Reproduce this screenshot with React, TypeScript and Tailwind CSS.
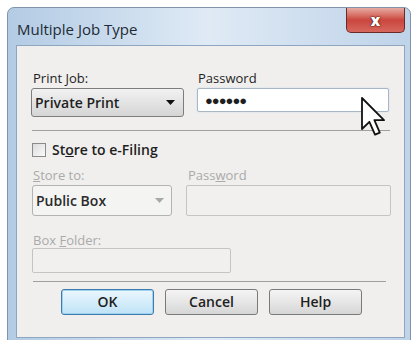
import React from "react";

const font = { fontFamily: '"Open Sans", "Noto Sans", sans-serif' };

function Arrow({ color = "#111" }: { color?: string }) {
  return (
    <svg width="9" height="6" viewBox="0 0 9 6">
      <polygon points="0,0 9,0 4.5,5" fill={color} />
    </svg>
  );
}

export default function App() {
  return (
    <div className="relative w-[412px] h-[340px] bg-white overflow-hidden" style={font}>
      <div className="ml-[7px] mt-[7px] w-[404px] h-[336px] rounded-t-[7px] border border-[#7f93aa] bg-gradient-to-r from-[#b3cbe4] via-[#dfeaf5] to-[#bfd3e9] flex flex-col">
        {/* title bar */}
        <div className="h-[37px] flex items-start justify-between">
          <div className="pl-[9px] pt-[12px] text-[15px] leading-[18px] text-[#1e2a35]">Multiple Job Type</div>
          <div className="mr-[5px] w-[59px] h-[25px] rounded-b-[5px] border border-[#6b2a27] border-t-0 bg-gradient-to-b from-[#e6aaa2] via-[#c9463e] to-[#d6675d] flex items-center justify-center">
            <span className="text-white font-extrabold text-[15px] leading-none" style={{ textShadow: "0 0 2px #3a0a0a, 0 0 1px #3a0a0a" }}>x</span>
          </div>
        </div>
        {/* client */}
        <div className="ml-[8px] mr-[5px] mb-[4px] flex-1 border border-[#8ea6c0] bg-[#f0efed] flex flex-col text-[13px] leading-[16px] text-[#1e1e1e]">
          {/* row 1 */}
          <div className="flex mt-[24px] ml-[14px]">
            <div className="flex flex-col w-[153px]">
              <span className="font-medium pl-[2px]">Print <u>J</u>ob:</span>
              <div className="mt-[2px] h-[29px] rounded-[3px] border border-[#7d7d7d] bg-gradient-to-b from-[#f2f2f2] to-[#d5d5d5] flex items-center justify-between pl-[3px] pr-[8px]">
                <span className="font-semibold text-[14px]">Private Print</span>
                <Arrow />
              </div>
            </div>
            <div className="flex flex-col ml-[13px] w-[192px]">
              <span className="font-medium pl-[1px]">Password</span>
              <div className="mt-[2px] h-[24px] rounded-[2px] border border-[#a9b6c4] bg-white flex items-center pl-[7px] shadow-[0_0_2px_#c9dcee]">
                <span className="text-[13px] tracking-[-1px] font-bold">●●●●●●</span>
              </div>
            </div>
          </div>
          <div className="mt-[13px] ml-[15px] w-[358px] h-[2px] border-t border-[#a0a0a0] border-b-white" />
          {/* checkbox */}
          <div className="flex items-center mt-[10px] ml-[15px] gap-[6px]">
            <div className="w-[14px] h-[14px] border border-[#8b8b8b] bg-gradient-to-br from-[#dcdcdc] to-[#fafafa]" />
            <span className="font-semibold text-[14px]">St<u>o</u>re to e-Filing</span>
          </div>
          {/* store row */}
          <div className="flex mt-[9px] ml-[15px]">
            <div className="flex flex-col w-[140px]">
              <span className="text-[#aaaaaa] pl-[1px]"><u>S</u>tore to:</span>
              <div className="mt-[2px] h-[31px] rounded-[3px] border border-[#b3b3b3] bg-[#f4f4f3] flex items-center justify-between pl-[3px] pr-[7px]">
                <span className="font-semibold text-[14px] text-[#2a2a2a]">Public Box</span>
                <Arrow color="#a8a8a8" />
              </div>
            </div>
            <div className="flex flex-col ml-[14px] w-[205px]">
              <span className="text-[#aaaaaa] pl-[2px]">Pass<u>w</u>ord</span>
              <div className="mt-[2px] h-[31px] rounded-[2px] border border-[#c4c4c4] bg-[#f1f0ee]" />
            </div>
          </div>
          {/* box folder */}
          <div className="flex flex-col mt-[16px] ml-[15px] w-[199px]">
            <span className="text-[#aaaaaa] pl-[1px]">Box <u>F</u>older:</span>
            <div className="mt-[0px] h-[25px] rounded-[2px] border border-[#c4c4c4] bg-[#f1f0ee]" />
          </div>
          <div className="mt-[8px] ml-[16px] w-[353px] h-[2px] border-t border-[#a0a0a0] border-b-white" />
          {/* buttons */}
          <div className="flex mt-[6px] ml-[44px] gap-[11px] text-[14px] font-semibold">
            <div className="w-[93px] h-[26px] rounded-[3px] border border-[#3d7bad] bg-gradient-to-b from-[#eaf6fd] via-[#d5edfa] to-[#bee3f6] flex items-center justify-center text-[#1e1e1e] shadow-[inset_0_0_0_1px_#9fd2ef]">OK</div>
            <div className="w-[93px] h-[26px] rounded-[3px] border border-[#7a7a7a] bg-gradient-to-b from-[#f4f4f4] via-[#e6e6e6] to-[#d6d6d6] flex items-center justify-center">Cancel</div>
            <div className="w-[93px] h-[26px] rounded-[3px] border border-[#7a7a7a] bg-gradient-to-b from-[#f4f4f4] via-[#e6e6e6] to-[#d6d6d6] flex items-center justify-center">Help</div>
          </div>
        </div>
      </div>
      {/* mouse cursor */}
      <svg className="absolute left-[361px] top-[97px]" width="26" height="40" viewBox="0 0 13 20">
        <polygon points="0.5,0.5 0.5,16 4.2,12.4 7,18.8 9.4,17.8 6.7,11.6 11.5,11.6" fill="white" stroke="#111" strokeWidth="0.9" strokeLinejoin="round" />
      </svg>
    </div>
  );
}
